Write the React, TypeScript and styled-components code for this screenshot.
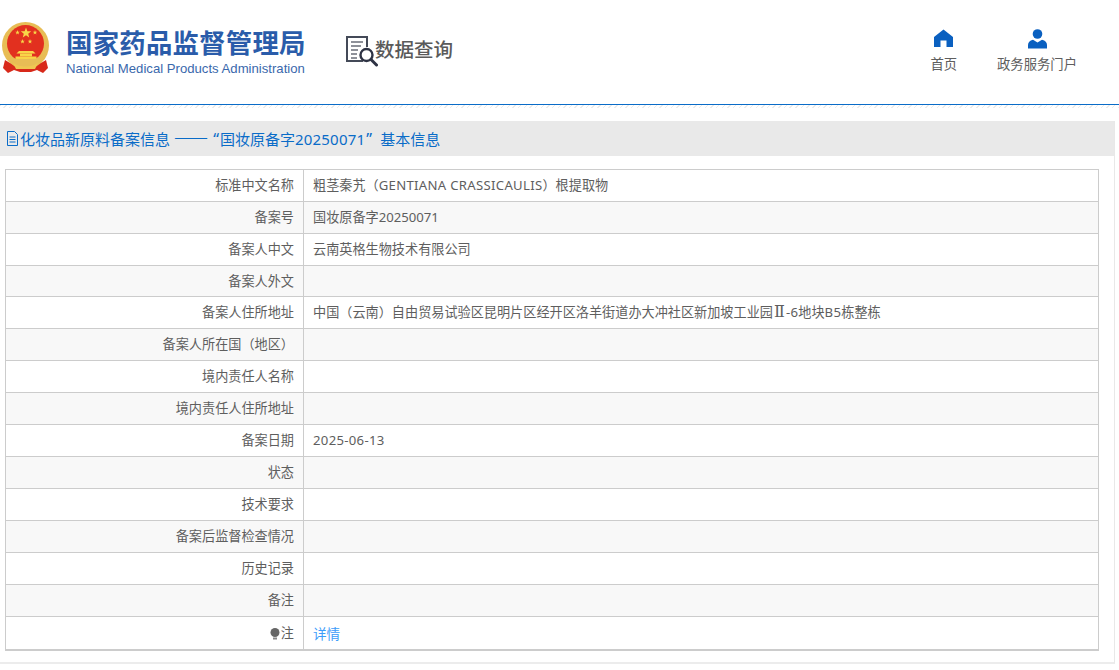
import React from "react";
import styled, { createGlobalStyle } from "styled-components";

const Global = createGlobalStyle`
  html, body { margin: 0; padding: 0; background: #fff; overflow: hidden; }
  body { font-family: "Noto Sans", "Noto Sans CJK SC", "Liberation Sans", sans-serif; color: #5e5e5e; }
  * { box-sizing: border-box; }
`;

const Page = styled.div`
  width: 1119px;
  height: 670px;
  overflow: hidden;
`;

const Header = styled.header`
  height: 104px;
  display: flex;
  align-items: flex-start;
  padding-left: 2px;
`;

const Brand = styled.div`
  display: flex;
  width: 344px;
  padding-top: 22px;
`;

const BrandText = styled.div`
  margin-left: 16px;
  display: flex;
  flex-direction: column;
  color: #2a5caa;
`;

const BrandCn = styled.div`
  font-family: "Noto Sans CJK SC", sans-serif;
  font-weight: 700;
  font-size: 26.4px;
  line-height: 40px;
  letter-spacing: 0.25px;
  white-space: nowrap;
`;

const BrandEn = styled.div`
  font-family: "Liberation Sans", sans-serif;
  font-size: 13.15px;
  line-height: 16px;
  margin-top: -1px;
  white-space: nowrap;
  color: #3a68ac;
`;

const Query = styled.div`
  display: flex;
  align-items: center;
  padding-top: 36px;
`;

const QueryText = styled.span`
  font-family: "Noto Sans CJK SC", sans-serif;
  font-size: 19.5px;
  font-weight: 500;
  line-height: 28px;
  color: #5a5a5a;
  margin-left: -3px;
  margin-top: -5px;
`;

const Nav = styled.nav`
  margin-left: auto;
  display: flex;
  padding-top: 29px;
  padding-right: 42px;
  gap: 40px;
`;

const NavItem = styled.a`
  display: flex;
  flex-direction: column;
  align-items: center;
  font-size: 13.33px;
  line-height: 18px;
  color: #5e5e5e;
`;

const NavIcon = styled.div`
  height: 21px;
  margin-bottom: 5px;
`;

const Rule = styled.div`
  height: 17px;
  border-top: 1px solid #0a6cc8;
  background-image: repeating-linear-gradient(135deg, #ececec 0 1px, #fff 1px 4px);
  background-size: 100% 3px;
  background-repeat: no-repeat;
`;

const Panel = styled.section`
  width: 1115px;
  height: 543px;
  border-right: 1px solid #e8e8e8;
  border-bottom: 2px solid #ececec;
`;

const Heading = styled.h2`
  margin: 0;
  height: 35px;
  background: #e9e9e9;
  display: flex;
  align-items: center;
  padding-left: 6px;
  font-size: 15px;
  font-weight: 400;
  color: #0a6cc8;
  white-space: pre;
`;

const Dash = styled.span`
  font-family: "Noto Sans CJK SC", sans-serif;
  font-size: 20.5px;
  font-weight: 300;
  line-height: 0;
  position: relative;
  top: -4px;
`;

const OpenQuote = styled.span`
  display: inline-block;
  width: 12px;
  text-align: right;
  font-size: 16px;
  padding-right: 1px;
`;

const CloseQuote = styled.span`
  display: inline-block;
  width: 15px;
  text-align: left;
  font-size: 16px;
  padding-left: 1px;
`;

const HeadingCode = styled.span`
  letter-spacing: 0.2px;
`;

const Latin = styled.span`
  letter-spacing: 0.3px;
`;

const Roman = styled.span`
  display: inline-block;
  width: 13px;
  text-align: center;
  font-family: "DejaVu Serif", serif;
  font-size: 16px;
  line-height: 0;
`;

const TableWrap = styled.div`
  padding: 13px 15px 0 5px;
`;

const Table = styled.table`
  width: 1094px;
  border-collapse: collapse;
  table-layout: fixed;
  border: 1px solid #ccc;
  border-bottom-width: 2px;
  font-size: 13.15px;
  tr:last-child th, tr:last-child td { padding-bottom: 0; }
`;

const Row = styled.tr<{ $height: number }>`
  height: ${(p) => p.$height}px;
  &:nth-child(even) { background: #f8f8f8; }
`;

const Label = styled.th`
  width: 298px;
  text-align: right;
  font-weight: 400;
  padding: 0 9px 2px 0;
  border: 1px solid #ccc;
  color: #5e5e5e;
`;

const Value = styled.td`
  padding: 0 0 2px 9px;
  border: 1px solid #ccc;
  color: #5e5e5e;
  white-space: nowrap;
`;

const Link = styled.a`
  color: #3c9cfa;
  font-size: 13.6px;
`;

const Bulb = styled.svg`
  width: 10px;
  height: 12px;
  vertical-align: -1.5px;
  margin-right: 1px;
`;

const DocIcon = styled.svg`
  width: 13px;
  height: 15px;
  margin-right: 1px;
`;

const starPoints = (cx: number, cy: number, r: number) =>
  Array.from({ length: 10 }, (_, i) => {
    const a = -Math.PI / 2 + (i * Math.PI) / 5;
    const d = i % 2 === 0 ? r : r * 0.42;
    return `${(cx + d * Math.cos(a)).toFixed(2)},${(cy + d * Math.sin(a)).toFixed(2)}`;
  }).join(" ");

const Emblem = () => (
  <svg width="48" height="53" viewBox="0 0 48 53">
    <circle cx="23.5" cy="23.5" r="23.5" fill="#e8bd55" />
    <circle cx="23.5" cy="21.5" r="18.5" fill="#e2301f" />
    <g fill="#f8d648">
      <polygon points={starPoints(24, 11, 5.5)} />
      <polygon points={starPoints(15.5, 10.5, 2.4)} />
      <polygon points={starPoints(20.5, 19.5, 2.4)} />
      <polygon points={starPoints(28, 19.5, 2.4)} />
      <polygon points={starPoints(33, 10.5, 2.4)} />
      <polygon points="17,29 31,29 33.5,31.5 14.5,31.5" />
      <rect x="18" y="31.5" width="12" height="3" />
      <rect x="13.5" y="34.5" width="21" height="2.5" />
    </g>
    <path d="M6 36 Q14 37 23.5 37 Q33 37 42 36 L37 45 L10 45 Z" fill="#e8bd55" />
    <path d="M3 38 L8 41 Q15 47 23.5 47 Q32 47 39 41 L44 38 L46 46 L41 51 L35 48 L29 50 L18 50 L12 48 L6 51 L1 46 Z" fill="#d8291a" />
    <path d="M11 41 Q17 44.5 23.5 44.5 Q30 44.5 36 41 L33 47 L14 47 Z" fill="#efc652" />
  </svg>
);

const SearchDoc = () => (
  <svg width="32" height="31" viewBox="0 0 32 31" fill="none">
    <path d="M17 25 H1 V1 H21 V11" stroke="#444a58" strokeWidth="2" />
    <path d="M5 6 H17 M5 10 H15 M5 14 H12 M5 18 H11 M5 22 H11" stroke="#6a6e78" strokeWidth="1.5" />
    <circle cx="20.5" cy="19" r="6" stroke="#2e3344" strokeWidth="2.4" />
    <path d="M25 23.5 L30.5 29" stroke="#2e3344" strokeWidth="3" strokeLinecap="round" />
  </svg>
);

const Home = () => (
  <svg width="19" height="18" viewBox="0 0 19 18">
    <path fillRule="evenodd" d="M9.5 0.5 L19 8 V18 H12.5 V11.5 H6.5 V18 H0 V8 Z" fill="#0a60c0" />
  </svg>
);

const Person = () => (
  <svg width="19" height="20" viewBox="0 0 19 20">
    <circle cx="9.5" cy="5" r="4.8" fill="#0a60c0" />
    <path d="M0 19.5 V16 Q0 12 5 10.8 L9.5 13.5 L14 10.8 Q19 12 19 16 V19.5 Z" fill="#0a60c0" />
  </svg>
);

const rows: [string, React.ReactNode, number][] = [
  ["标准中文名称", <>粗茎秦艽（<Latin>GENTIANA CRASSICAULIS</Latin>）根提取物</>, 32],
  ["备案号", "国妆原备字20250071", 32],
  ["备案人中文", "云南英格生物技术有限公司", 32],
  ["备案人外文", "", 31],
  ["备案人住所地址", <>中国（云南）自由贸易试验区昆明片区经开区洛羊街道办大冲社区新加坡工业园<Roman>Ⅱ</Roman><Latin>-6</Latin>地块<Latin>B5</Latin>栋整栋</>, 32],
  ["备案人所在国（地区）", "", 32],
  ["境内责任人名称", "", 32],
  ["境内责任人住所地址", "", 32],
  ["备案日期", <Latin>2025-06-13</Latin>, 32],
  ["状态", "", 32],
  ["技术要求", "", 32],
  ["备案后监督检查情况", "", 32],
  ["历史记录", "", 32],
  ["备注", "", 32],
];

export default function App() {
  return (
    <Page>
      <Global />
      <Header>
        <Brand>
          <Emblem />
          <BrandText>
            <BrandCn>国家药品监督管理局</BrandCn>
            <BrandEn>National Medical Products Administration</BrandEn>
          </BrandText>
        </Brand>
        <Query>
          <SearchDoc />
          <QueryText>数据查询</QueryText>
        </Query>
        <Nav>
          <NavItem>
            <NavIcon><Home /></NavIcon>
            首页
          </NavItem>
          <NavItem>
            <NavIcon><Person /></NavIcon>
            政务服务门户
          </NavItem>
        </Nav>
      </Header>
      <Rule />
      <Panel>
        <Heading>
          <DocIcon viewBox="0 0 13 15" fill="none" stroke="#0a6cc8">
            <path d="M1.5 0.5 H8.5 L11.5 3.5 V14.5 H1.5 Z" />
            <path d="M3.5 6 H9.5 M3.5 8.5 H9.5 M3.5 11 H9.5" />
          </DocIcon>
          化妆品新原料备案信息 <Dash>——</Dash> <OpenQuote>“</OpenQuote>国妆原备字<HeadingCode>20250071</HeadingCode><CloseQuote>”</CloseQuote>基本信息
        </Heading>
        <TableWrap>
          <Table>
            <tbody>
              {rows.map(([k, v, h]) => (
                <Row key={k} $height={h}>
                  <Label>{k}</Label>
                  <Value>{v}</Value>
                </Row>
              ))}
              <Row $height={33}>
                <Label>
                  <Bulb viewBox="0 0 10 12">
                    <circle cx="5" cy="4.5" r="4.5" fill="#666" />
                    <rect x="3" y="9.5" width="4" height="2" fill="#888" />
                  </Bulb>
                  注
                </Label>
                <Value><Link>详情</Link></Value>
              </Row>
            </tbody>
          </Table>
        </TableWrap>
      </Panel>
    </Page>
  );
}
